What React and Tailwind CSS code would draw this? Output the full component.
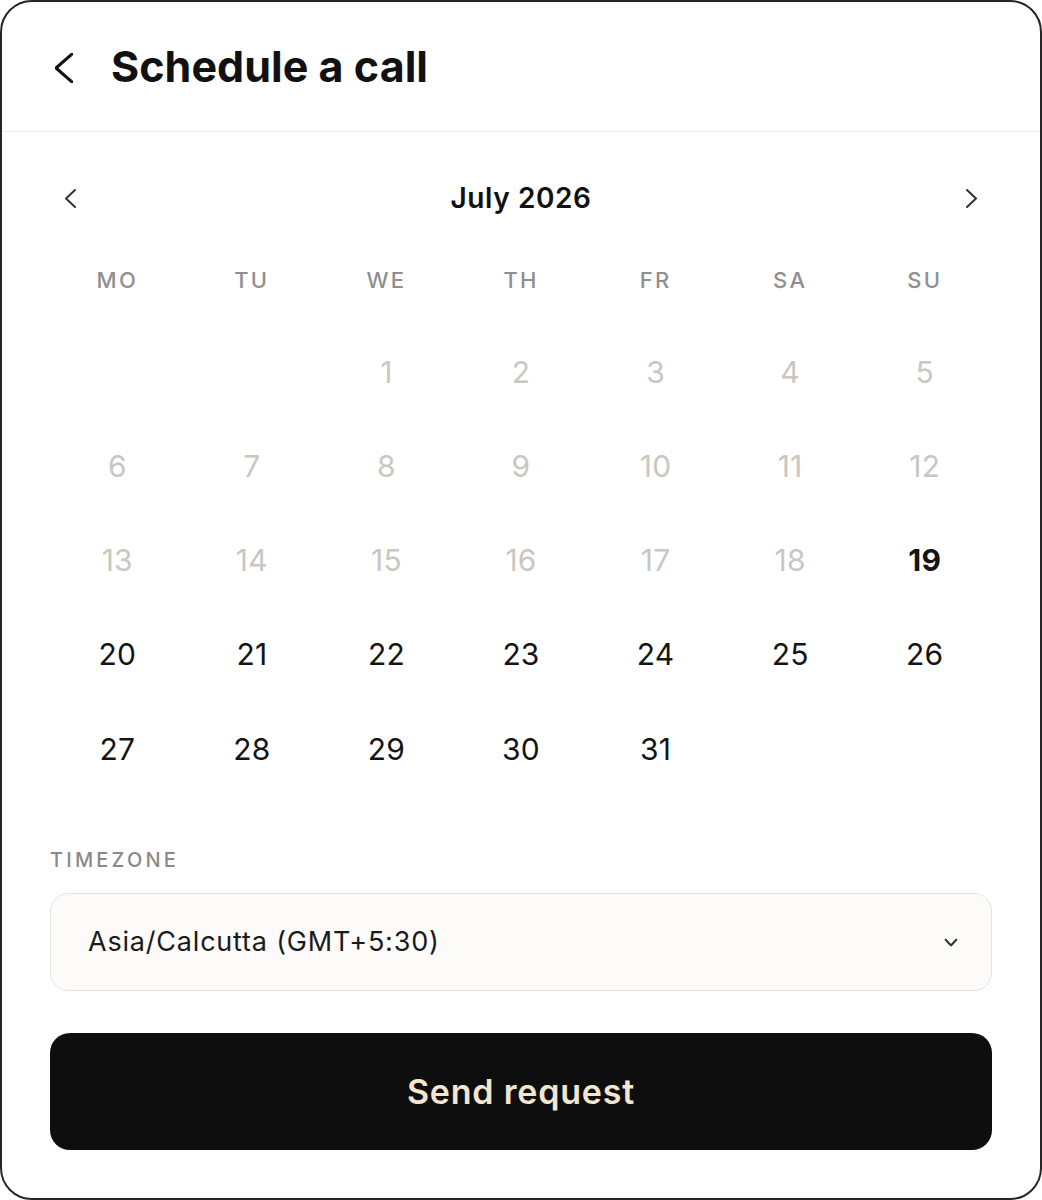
import React, { useState } from "react";

const FONT = { fontFamily: "Inter, 'Noto Sans', sans-serif" };

function Chevron({ dir = "left", className = "", w = 10, h = 18, stroke = 2 }) {
  const d = dir === "left" ? `M${w - 1} 1 L1 ${h / 2} L${w - 1} ${h - 1}` : `M1 1 L${w - 1} ${h / 2} L1 ${h - 1}`;
  return (
    <svg width={w} height={h} viewBox={`0 0 ${w} ${h}`} className={className} fill="none">
      <path d={d} stroke="currentColor" strokeWidth={stroke} strokeLinecap="round" strokeLinejoin="round" />
    </svg>
  );
}

const WEEKDAYS = ["MO", "TU", "WE", "TH", "FR", "SA", "SU"];
const TODAY = 19;

export default function App() {
  const [selected, setSelected] = useState(null);
  // July 2026 starts on a Wednesday
  const cells = [null, null, ...Array.from({ length: 31 }, (_, i) => i + 1)];

  return (
    <div style={FONT} className="w-full h-[1200px] bg-white border-2 border-[#262626] rounded-[32px] overflow-hidden flex flex-col">
      <header className="h-[130px] shrink-0 border-b border-[#ececec] flex items-center pl-[53px]">
        <button className="text-[#111] pt-[2px]">
          <Chevron dir="left" w={18} h={30} stroke={3} />
        </button>
        <h1 className="ml-[38px] text-[43px] font-bold tracking-[0.05px] text-[#111] leading-none">Schedule a call</h1>
      </header>

      <div className="px-[48px] pt-[46px]">
        <div className="h-10 flex items-center justify-between px-[15px] text-[#333]">
          <button><Chevron dir="left" w={11} h={19} stroke={2} /></button>
          <div className="text-[28px] font-semibold text-[#111] tracking-[0.6px]">July 2026</div>
          <button><Chevron dir="right" w={11} h={19} stroke={2} /></button>
        </div>

        <div className="mt-[42px] grid grid-cols-7 h-10 items-center">
          {WEEKDAYS.map(d => (
            <div key={d} className="text-center text-[22px] font-medium tracking-[2.2px] text-[#8f8f8f]">{d}</div>
          ))}
        </div>

        <div className="mt-[25px] grid grid-cols-7 auto-rows-[94.25px]">
          {cells.map((n, i) => {
            if (!n) return <div key={i} />;
            const past = n < TODAY;
            const isToday = n === TODAY;
            return (
              <button
                key={i}
                onClick={() => !past && setSelected(n)}
                className={`flex items-center justify-center text-[30px] tracking-[0.2px]
                  ${past ? "text-[#c9c7c2]" : "text-[#141414]"}
                  ${isToday ? "font-bold" : "font-normal"}
                  ${selected === n ? "underline" : ""}`}
              >
                {n}
              </button>
            );
          })}
        </div>

        <div className="mt-[52px] h-6 flex items-center text-[20px] font-medium tracking-[3.2px] text-[#8a8a8a]">TIMEZONE</div>

        <button className="mt-[21px] w-full h-[98px] rounded-[18px] border border-[#e6e4df] bg-[#fcfbf9] flex items-center justify-between pl-[37px] pr-[36px]">
          <span className="text-[27px] text-[#1a1a1a] tracking-[0.8px]">Asia/Calcutta (GMT+5:30)</span>
          <Chevron dir="right" w={8} h={13} stroke={2} className="rotate-90 text-[#333]" />
        </button>

        <button className="mt-[42px] w-full h-[117px] rounded-[20px] bg-[#0e0e0e] flex items-center justify-center">
          <span className="text-[34px] font-semibold text-[#f3e5d0] tracking-[0.8px]">Send request</span>
        </button>
      </div>
    </div>
  );
}
